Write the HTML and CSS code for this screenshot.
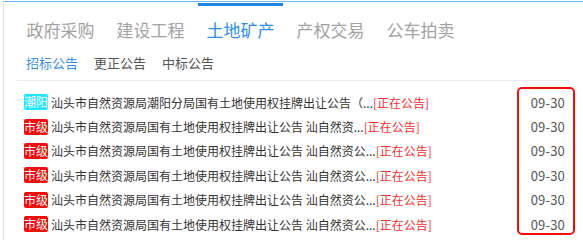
FILE: index.html
```html
<!DOCTYPE html>
<html lang="zh-CN">
<head>
<meta charset="utf-8">
<link rel="stylesheet" href="styles.css">
</head>
<body>
<div class="panel">
  <div class="tabs">
    <div class="tab">政府采购</div>
    <div class="tab">建设工程</div>
    <div class="tab active">土地矿产</div>
    <div class="tab">产权交易</div>
    <div class="tab">公车拍卖</div>
  </div>
  <div class="subtabs">
    <span class="subtab active">招标公告</span>
    <span class="subtab">更正公告</span>
    <span class="subtab">中标公告</span>
  </div>
  <ul class="list">
    <li class="row"><span class="badge cyan">潮阳</span><span class="title">汕头市自然资源局潮阳分局国有土地使用权挂牌出让公告（...</span><span class="status">[正在公告]</span><span class="date">09-30</span></li>
    <li class="row"><span class="badge red">市级</span><span class="title">汕头市自然资源局国有土地使用权挂牌出让公告 汕自然资...</span><span class="status">[正在公告]</span><span class="date">09-30</span></li>
    <li class="row"><span class="badge red">市级</span><span class="title">汕头市自然资源局国有土地使用权挂牌出让公告 汕自然资公...</span><span class="status">[正在公告]</span><span class="date">09-30</span></li>
    <li class="row"><span class="badge red">市级</span><span class="title">汕头市自然资源局国有土地使用权挂牌出让公告 汕自然资公...</span><span class="status">[正在公告]</span><span class="date">09-30</span></li>
    <li class="row"><span class="badge red">市级</span><span class="title">汕头市自然资源局国有土地使用权挂牌出让公告 汕自然资公...</span><span class="status">[正在公告]</span><span class="date">09-30</span></li>
    <li class="row"><span class="badge red">市级</span><span class="title">汕头市自然资源局国有土地使用权挂牌出让公告 汕自然资公...</span><span class="status">[正在公告]</span><span class="date">09-30</span></li>
  </ul>
</div>
<div class="highlight"></div>
</body>
</html>
```

FILE: styles.css
```css
html, body {
  margin: 0;
  padding: 0;
  background: #fff;
  width: 583px;
  height: 240px;
  overflow: hidden;
  font-family: "Noto Sans CJK SC", "Noto Sans", sans-serif;
}

.panel {
  box-sizing: border-box;
  margin: 1px 0 0 3px;
  border-top: 1px solid #6db8f4;
  border-left: 1px solid #e6e6e6;
  height: 239px;
  overflow: hidden;
}

.tabs {
  display: flex;
  gap: 5px;
  padding-left: 14px;
}

.tab {
  position: relative;
  width: 85px;
  text-align: center;
  padding-top: 16px;
  font-size: 17px;
  line-height: 24px;
  color: #a3a3a3;
}

.tab.active {
  color: #2e8de6;
}

.tab.active::before {
  content: "";
  position: absolute;
  left: 0;
  right: 0;
  top: 1px;
  height: 3px;
  background: #1d86e4;
}

.subtabs {
  display: flex;
  gap: 16px;
  margin: 11px 13px 0 13px;
  padding: 0 0 7px 9px;
  border-bottom: 1px solid #ececec;
  font-size: 13px;
  line-height: 20px;
  color: #555;
}

.subtab.active {
  color: #3d8fe6;
}

.list {
  list-style: none;
  margin: 0;
  padding: 9px 0 0 0;
}

.row {
  display: flex;
  align-items: center;
  height: 24.4px;
  padding: 0 18px 0 20px;
  font-size: 12px;
  color: #333;
}

.badge {
  width: 24px;
  height: 16px;
  line-height: 16px;
  text-align: center;
  color: #fff;
  border-radius: 2px;
  margin-right: 3px;
  font-size: 12px;
}

.badge.cyan {
  background: #1ee6fb;
}

.badge.red {
  background: #f20c0c;
}

.title {
  white-space: nowrap;
}

.status {
  color: #f23030;
  white-space: nowrap;
}

.date {
  margin-left: auto;
  color: #555;
  font-size: 13px;
  letter-spacing: 0.2px;
}

.highlight {
  position: absolute;
  left: 517px;
  top: 87px;
  width: 54px;
  height: 144px;
  border: 2.5px solid #f40c0c;
  border-radius: 5px;
}
```
